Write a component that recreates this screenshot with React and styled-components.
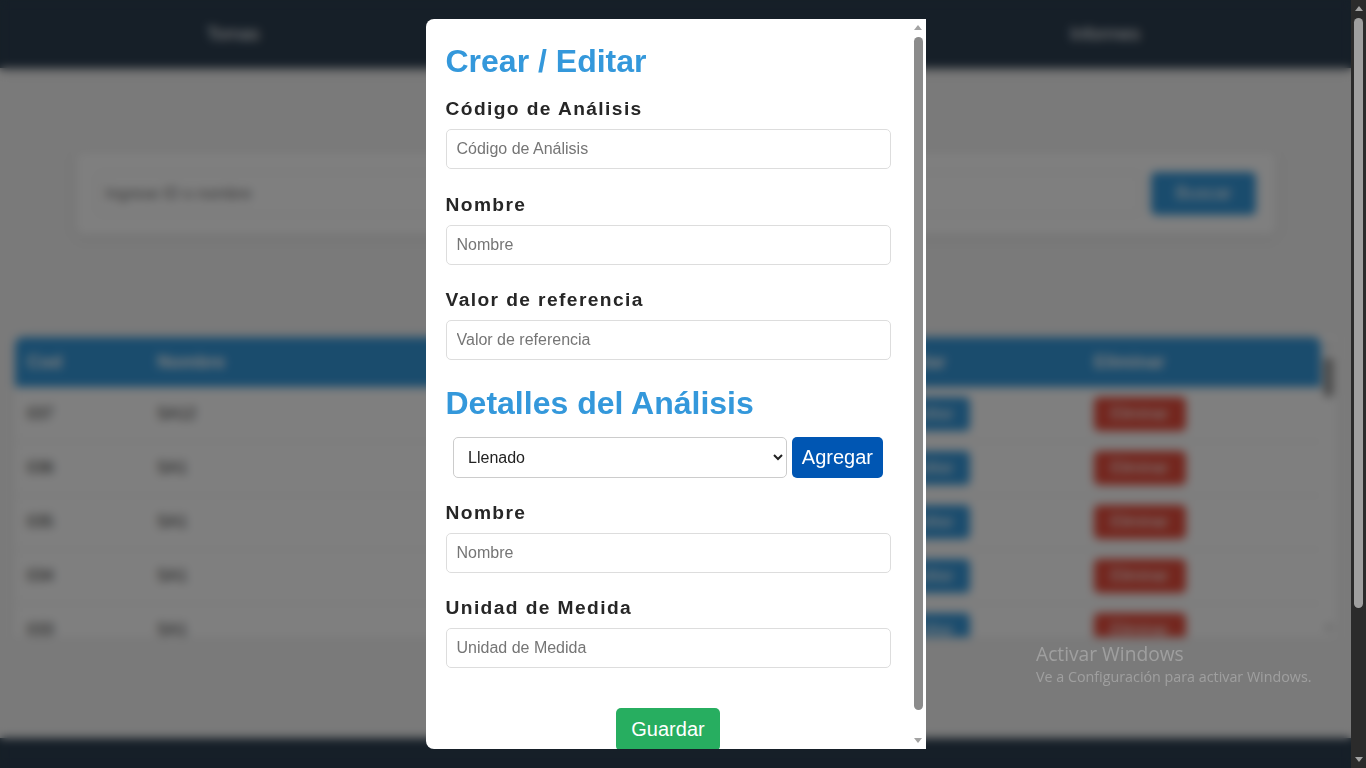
import React from "react";
import styled, { createGlobalStyle } from "styled-components";

const GlobalStyle = createGlobalStyle`
  html {
    scrollbar-width: none;
  }
  body {
    margin: 0;
    background: #f4f4f4;
    font-family: "Liberation Sans", Arial, sans-serif;
    color: #333;
  }
  * { box-sizing: border-box; }
`;

/* ---------- scrollbar drawing ---------- */

const Track = styled.div`
  width: 15px;
  flex: none;
  background: ${(p) => p.$track};
  display: flex;
  flex-direction: column;
  align-items: center;
`;

const PageTrack = styled(Track)`
  position: fixed;
  top: 0;
  right: 0;
  height: 100vh;
  z-index: 30;
`;

const ArrowBox = styled.div`
  height: 17px;
  width: 15px;
  flex: none;
  display: flex;
  align-items: center;
  justify-content: center;
`;

const Arrow = styled.div`
  width: 0;
  height: 0;
  border-left: 4px solid transparent;
  border-right: 4px solid transparent;
  ${(p) =>
    p.$dir === "up"
      ? `border-bottom: 5px solid ${p.$color};`
      : `border-top: 5px solid ${p.$color};`}
`;

const ThumbArea = styled.div`
  flex: 1;
  width: 15px;
  display: flex;
  justify-content: center;
`;

const Thumb = styled.div`
  width: 9px;
  border-radius: 5px;
  background: ${(p) => p.$color};
`;

function ScrollBar({ as, track, thumb, arrow, offset, size }) {
  return (
    <Track as={as} $track={track}>
      <ArrowBox>
        <Arrow $dir="up" $color={arrow} />
      </ArrowBox>
      <ThumbArea>
        <Thumb $color={thumb} style={{ marginTop: offset, height: size }} />
      </ThumbArea>
      <ArrowBox>
        <Arrow $dir="down" $color={arrow} />
      </ArrowBox>
    </Track>
  );
}

/* ---------- background page ---------- */

const Page = styled.div`
  margin-right: 15px;
`;

const NavBar = styled.nav`
  height: 68px;
  background: #2c3e50;
  display: grid;
  grid-template-columns: repeat(3, 1fr);
  align-items: center;
  padding: 0 28px 0 15px;
  box-shadow: 0 2px 6px rgba(0, 0, 0, 0.25);
`;

const NavLink = styled.a`
  color: #ffffff;
  font-size: 18px;
  text-align: center;
  text-decoration: none;
`;

const SearchCard = styled.section`
  max-width: 1200px;
  margin: 84px auto 0;
  background: #fff;
  border-radius: 8px;
  box-shadow: 0 2px 10px rgba(0, 0, 0, 0.1);
  padding: 20px;
  display: flex;
  gap: 10px;
  align-items: center;
`;

const SearchInput = styled.input`
  flex: 1;
  height: 43px;
  border: 1px solid #ddd;
  border-radius: 5px;
  padding: 0 9px;
  font: 16px "Liberation Sans", Arial, sans-serif;
`;

const SolidButton = styled.button`
  border: none;
  border-radius: 5px;
  color: #fff;
  background: ${(p) => p.$bg};
  font-family: "Liberation Sans", Arial, sans-serif;
  font-size: ${(p) => p.$size || 16}px;
  height: ${(p) => p.$h || 34}px;
  padding: 0 ${(p) => p.$px || 17}px;
  flex: none;
  cursor: pointer;
`;

const TableWrap = styled.div`
  margin: 102px 15px 0;
  height: 300px;
  display: flex;
`;

const TableScroll = styled.div`
  flex: 1;
  overflow-y: auto;
  scrollbar-width: none;
`;

const Table = styled.table`
  width: 100%;
  border-collapse: collapse;
  table-layout: fixed;
  background: #fff;
`;

const Col = styled.col`
  width: ${(p) => p.$w}px;
`;

const Th = styled.th`
  position: sticky;
  top: 0;
  height: 50px;
  padding: 0 12px;
  background: #3498db;
  color: #fff;
  font-size: 18px;
  font-weight: bold;
  text-align: left;
  &:first-child { border-top-left-radius: 8px; }
  &:last-child { border-top-right-radius: 8px; }
`;

const Td = styled.td`
  height: 54px;
  padding: 0 12px;
  font-size: 16px;
  color: #333;
  border-bottom: 1px solid #e3e3e3;
`;

const Footer = styled.footer`
  margin-top: 101px;
  height: 217px;
  background: #2c3e50;
`;

/* ---------- modal ---------- */

const Overlay = styled.div`
  position: fixed;
  top: 0;
  left: 0;
  bottom: 0;
  right: 15px;
  background: rgba(0, 0, 0, 0.5);
  backdrop-filter: blur(5px);
  display: flex;
  align-items: center;
  justify-content: center;
  z-index: 10;
`;

const Modal = styled.div`
  width: 500px;
  height: 95vh;
  display: flex;
  background: #fff;
  border-radius: 8px 0 0 8px;
  overflow: hidden;
`;

const ModalBody = styled.div`
  flex: 1;
  overflow-y: auto;
  scrollbar-width: none;
  padding: 24px 20px;
`;

const Title = styled.h2`
  margin: 0 0 ${(p) => p.$mb}px;
  font-size: 32px;
  font-weight: bold;
  line-height: normal;
  color: #3498db;
`;

const Group = styled.div`
  margin-bottom: 24.5px;
`;

const Label = styled.label`
  display: block;
  margin-bottom: 9px;
  font-size: 19.2px;
  font-weight: bold;
  letter-spacing: 1.4px;
  color: #262626;
`;

const Input = styled.input`
  display: block;
  width: 100%;
  height: 40px;
  border: 1px solid #ddd;
  border-radius: 5px;
  padding: 0 10px;
  font: 16px "Liberation Sans", Arial, sans-serif;
  color: #333;
  &::placeholder { color: #757575; }
`;

const SelectRow = styled.div`
  display: flex;
  justify-content: center;
  gap: 5px;
  margin-bottom: 24px;
`;

const Select = styled.select`
  width: 75%;
  height: 41px;
  border: 1px solid #ccc;
  border-radius: 5px;
  padding: 0 10px;
  background: #fff;
  font: 16px "Liberation Sans", Arial, sans-serif;
  color: #222;
`;

const Actions = styled.div`
  display: flex;
  justify-content: center;
  margin-top: 40px;
`;

const Watermark = styled.div`
  position: fixed;
  left: 1036px;
  top: 642px;
  z-index: 20;
  font-family: "Open Sans", "Noto Sans", sans-serif;
  color: rgba(255, 255, 255, 0.28);
  pointer-events: none;
`;

const WatermarkLine = styled.div`
  font-size: ${(p) => p.$size}px;
  line-height: ${(p) => p.$lh}px;
  white-space: nowrap;
`;

const rows = Array.from({ length: 37 }, (_, i) => {
  const n = 37 - i;
  return {
    cod: String(n).padStart(3, "0"),
    nombre: n === 37 ? "SA12" : "SA1",
    valor: "10 - 20",
  };
});

export default function App() {
  return (
    <>
      <GlobalStyle />
      <Page>
        <NavBar>
          <NavLink href="#">Tomas</NavLink>
          <NavLink href="#">Análisis</NavLink>
          <NavLink href="#">Informes</NavLink>
        </NavBar>

        <SearchCard>
          <SearchInput placeholder="Ingrese ID o nombre" />
          <SolidButton $bg="#3498db" $size={18} $h={43} $px={24}>
            Buscar
          </SolidButton>
        </SearchCard>

        <TableWrap>
          <TableScroll>
            <Table>
              <colgroup>
                <Col $w={130} />
                <Col $w={368} />
                <Col $w={369} />
                <Col $w={199} />
                <Col $w={239} />
              </colgroup>
              <thead>
                <tr>
                  <Th>Cod</Th>
                  <Th>Nombre</Th>
                  <Th>Valor de Referencia</Th>
                  <Th>Editar</Th>
                  <Th>Eliminar</Th>
                </tr>
              </thead>
              <tbody>
                {rows.map((r) => (
                  <tr key={r.cod}>
                    <Td>{r.cod}</Td>
                    <Td>{r.nombre}</Td>
                    <Td>{r.valor}</Td>
                    <Td>
                      <SolidButton $bg="#3498db">Editar</SolidButton>
                    </Td>
                    <Td>
                      <SolidButton $bg="#e74c3c">Eliminar</SolidButton>
                    </Td>
                  </tr>
                ))}
              </tbody>
            </Table>
          </TableScroll>
          <ScrollBar track="#ffffff" thumb="#8b8b8b" arrow="#a3a3a3" offset={3} size={40} />
        </TableWrap>

        <Footer />
      </Page>

      <Overlay>
        <Modal>
          <ModalBody>
            <Title $mb={18}>Crear / Editar</Title>
            <Group>
              <Label>Código de Análisis</Label>
              <Input placeholder="Código de Análisis" />
            </Group>
            <Group>
              <Label>Nombre</Label>
              <Input placeholder="Nombre" />
            </Group>
            <Group>
              <Label>Valor de referencia</Label>
              <Input placeholder="Valor de referencia" />
            </Group>

            <Title $mb={15}>Detalles del Análisis</Title>
            <SelectRow>
              <Select defaultValue="Llenado">
                <option>Llenado</option>
                <option>Resultado</option>
              </Select>
              <SolidButton $bg="#0056b3" $size={20} $h={41} $px={10}>
                Agregar
              </SolidButton>
            </SelectRow>
            <Group>
              <Label>Nombre</Label>
              <Input placeholder="Nombre" />
            </Group>
            <Group>
              <Label>Unidad de Medida</Label>
              <Input placeholder="Unidad de Medida" />
            </Group>
            <Actions>
              <SolidButton $bg="#27ae60" $size={20} $h={43} $px={15}>
                Guardar
              </SolidButton>
            </Actions>
          </ModalBody>
          <ScrollBar track="#ffffff" thumb="#8b8b8b" arrow="#a3a3a3" offset={1} size={673} />
        </Modal>
      </Overlay>

      <ScrollBar as={PageTrack} track="#2b2b2b" thumb="#9f9f9f" arrow="#a3a3a3" offset={1} size={590} />

      <Watermark>
        <WatermarkLine $size={19.2} $lh={24}>
          Activar Windows
        </WatermarkLine>
        <WatermarkLine $size={14.3} $lh={22}>
          Ve a Configuración para activar Windows.
        </WatermarkLine>
      </Watermark>
    </>
  );
}
